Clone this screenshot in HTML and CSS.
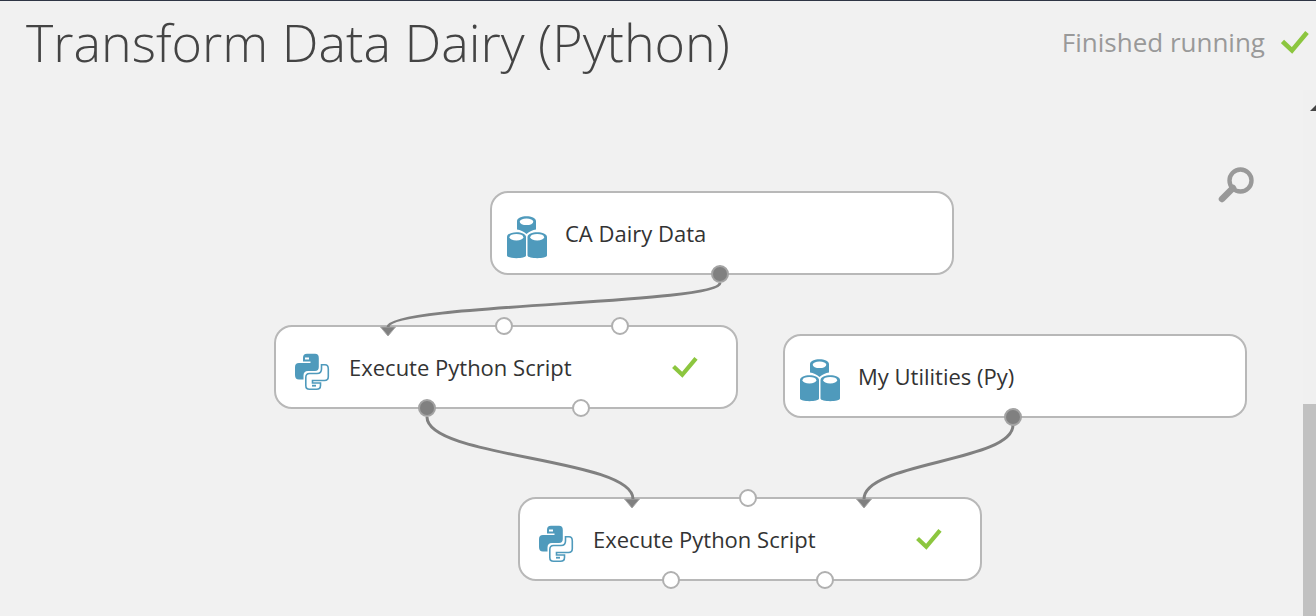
FILE: index.html
```html
<!DOCTYPE html>
<html lang="en">
<head>
<meta charset="utf-8">
<title>Transform Data Dairy (Python)</title>
<link rel="stylesheet" href="styles.css">
</head>
<body>
<svg class="defs" aria-hidden="true">
  <symbol id="check" viewBox="0 0 28 24"><path d="M1.5 11.5 L11 20.5 L26 2.5" fill="none" stroke="#8cc63f" stroke-width="4.6"/></symbol>
  <symbol id="data" viewBox="0 0 42 44">
    <g fill="#4f9abc">
      <path d="M11 6 C11 -.5 30 -.5 30 6 V14.500 Q25 15 20.500 19 Q16 15 11 14.500 Z"/>
      <path d="M1 22 C1 15.500 20 15.500 20 22 V40.500 C20 44 1 44 1 40.500 Z"/>
      <path d="M21.500 22 C21.500 15.500 41 15.500 41 22 V40.500 C41 44 21.500 44 21.500 40.500 Z"/>
    </g>
    <g fill="#fff"><ellipse cx="20.500" cy="6.800" rx="6.800" ry="3.300"/><ellipse cx="10.400" cy="22.200" rx="6.900" ry="3.300"/><ellipse cx="31.200" cy="22.200" rx="6.900" ry="3.300"/></g>
  </symbol>
  <symbol id="python" viewBox="0 0 36 39">
    <path fill="#4f9abc" d="M9 9.500 V6 Q9 1.800 13 1.800 H21 Q24.800 1.800 24.800 6 V15 Q24.800 19 21 19 H14 Q9.500 19 9.500 23.500 V27.500 H5 Q1 27.500 1 23 V15 Q1 11 5 11 H16.500 V9.500 Z"/>
    <rect x="11" y="5.500" width="4" height="2" fill="#fff"/>
    <path fill="#fff" stroke="#4f9abc" stroke-width="1.600" d="M27.500 12.800 H31 Q34.300 12.800 34.300 17 V24.500 Q34.300 28.500 30.500 28.500 H18.500 V31 H26.500 V33.500 Q26.500 37.300 22.500 37.300 H15.500 Q11.800 37.300 11.800 33.500 V25.500 Q11.800 21.500 15.500 21.500 H23 Q27.500 21.500 27.500 17 Z"/>
    <rect x="18" y="32.800" width="4" height="1.800" fill="#4f9abc"/>
  </symbol>
</svg>
<div class="page">
  <header class="header">
    <h1 class="title">Transform Data Dairy (Python)</h1>
    <p class="status">Finished running <svg class="check"><use href="#check"/></svg></p>
  </header>
  <main class="workspace">
    <section class="canvas" aria-label="Experiment">
      <article class="node node-dairy">
        <svg class="data-icon"><use href="#data"/></svg>
        <h2 class="label">CA Dairy Data</h2>
        <span class="port out middle used"></span>
      </article>
      <article class="node node-script-a">
        <svg class="python-icon"><use href="#python"/></svg>
        <h2 class="label">Execute Python Script</h2>
        <svg class="check check-small"><use href="#check"/></svg>
        <svg class="arrow first" viewBox="0 0 18 12"><path d="M1.500 1 H16.500 L9 10 Z"/></svg>
        <span class="port in middle"></span>
        <span class="port in last"></span>
        <span class="port out left used"></span>
        <span class="port out right"></span>
      </article>
      <article class="node node-utilities">
        <svg class="data-icon"><use href="#data"/></svg>
        <h2 class="label">My Utilities (Py)</h2>
        <span class="port out middle used"></span>
      </article>
      <article class="node node-script-b">
        <svg class="python-icon"><use href="#python"/></svg>
        <h2 class="label">Execute Python Script</h2>
        <svg class="check check-small"><use href="#check"/></svg>
        <svg class="arrow first" viewBox="0 0 18 12"><path d="M1.500 1 H16.500 L9 10 Z"/></svg>
        <span class="port in middle"></span>
        <svg class="arrow last" viewBox="0 0 18 12"><path d="M1.500 1 H16.500 L9 10 Z"/></svg>
        <span class="port out left"></span>
        <span class="port out right"></span>
      </article>
      <svg class="wires" aria-hidden="true">
        <path d="M720 193 C720 214 388 214 388 237"/>
        <path d="M427 327 C427 368 633 368 633 409"/>
        <path d="M1013 335 C1013 372 864 372 864 409"/>
      </svg>
      <button class="zoom" type="button" aria-label="Zoom">
        <svg viewBox="0 0 36 36"><path d="M15 21 L4 32" stroke-width="6.500" stroke-linecap="round"/><circle cx="22.500" cy="13.500" r="11" stroke-width="4.400"/></svg>
      </button>
    </section>
    <div class="scrollbar">
      <svg class="scroll-up" viewBox="0 0 14 30"><path d="M7 21 L14 14 V21 Z"/></svg>
      <div class="thumb"></div>
    </div>
  </main>
</div>
</body>
</html>
```
FILE: styles.css
```css
* { box-sizing: border-box; }
body {
  margin: 0;
  background: #f1f1f1;
  color: #333;
  font-family: "Open Sans", "Noto Sans", sans-serif;
}
svg { display: block; }
h1, h2, p { margin: 0; }
.defs { position: absolute; width: 0; height: 0; }
.page {
  display: flex;
  flex-direction: column;
  min-height: 100vh;
  border-top: 1px solid #2f3545;
  overflow: hidden;
}
.header {
  display: flex;
  justify-content: space-between;
  align-items: center;
  height: 89px;
  padding: 0 7px 8px 26px;
}
.title {
  font-size: 52px;
  font-weight: 300;
  line-height: 80px;
  color: #444;
  white-space: nowrap;
}
.status {
  display: flex;
  align-items: center;
  gap: 16px;
  font-size: 26px;
  line-height: 40px;
  color: #999;
  white-space: nowrap;
}
.check { width: 28px; height: 24px; }
.check-small { width: 26px; height: 22px; }
.workspace { display: flex; flex: 1; }
.canvas { position: relative; flex: 1; }
.node {
  position: absolute;
  display: flex;
  align-items: center;
  width: 464px;
  height: 84px;
  padding-right: 38px;
  background: #fff;
  border: 2px solid #b8b8b8;
  border-radius: 18px;
}
.node-dairy { left: 490px; top: 101px; }
.node-script-a { left: 274px; top: 235px; }
.node-utilities { left: 783px; top: 244px; }
.node-script-b { left: 518px; top: 407px; }
.label {
  flex: 1;
  font-size: 22px;
  font-weight: 400;
  line-height: 32px;
}
.data-icon { width: 42px; height: 44px; margin: 8px 17px 0 14px; }
.python-icon { width: 36px; height: 39px; margin: 8px 19px 0 18px; }
.port {
  position: absolute;
  z-index: 2;
  width: 18px;
  height: 18px;
  background: #fff;
  border: 2px solid #b0b0b0;
  border-radius: 50%;
}
.used { background: #808080; border-color: #a3a3a3; }
.in { top: -10px; }
.out { bottom: -10px; }
.left { left: 142px; }
.right { left: 296px; }
.middle { left: 219px; }
.last { left: 335px; }
.first { left: 103px; }
.arrow {
  position: absolute;
  top: -1px;
  width: 18px;
  height: 12px;
  fill: #808080;
  stroke: #a8a8a8;
}
.wires {
  position: absolute;
  z-index: 1;
  inset: 0;
  width: 100%;
  height: 100%;
  fill: none;
  stroke: #808080;
  stroke-width: 3;
  pointer-events: none;
}
.zoom {
  position: absolute;
  top: 77px;
  right: 49px;
  width: 36px;
  height: 36px;
  padding: 0;
  border: 0;
  background: none;
}
.zoom svg { width: 36px; height: 36px; fill: none; stroke: #999; }
.scrollbar {
  display: flex;
  flex-direction: column;
  justify-content: space-between;
  width: 13px;
  background: #f0f0f0;
}
.scroll-up { width: 14px; height: 30px; fill: #444; }
.thumb { height: 212px; background: #c1c1c1; }
```
